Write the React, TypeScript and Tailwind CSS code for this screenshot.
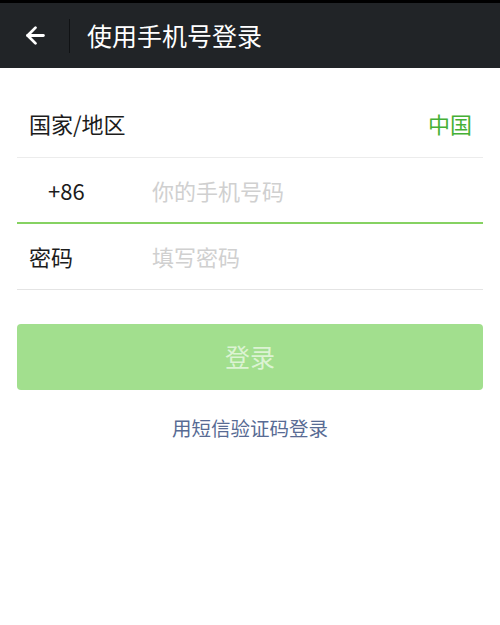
import { ArrowLeft } from 'lucide-react';

const font = {
  fontFamily: '"Noto Sans CJK SC", "Noto Sans", sans-serif',
};

const App = () => {
  return (
    <div className="bg-white w-[500px] h-[625px]" style={font}>
      <div className="bg-black h-[3px]" />
      <div className="flex items-center bg-[#212427] pl-[22px] h-[65px]">
        <ArrowLeft className="text-white" size={27} strokeWidth={2.5} />
        <div className="bg-[#101214] ml-[20px] w-[1px] h-[34px]" />
        <h1 className="ml-[17px] text-[25px] text-white leading-none">使用手机号登录</h1>
      </div>

      <div className="flex flex-col mx-[17px] mt-[22px]">
        <div className="flex justify-between items-center border-b border-b-[#ececec] pr-[11px] pl-[12px] h-[68px]">
          <span className="text-[#1c1c1c] text-[22px]">国家/地区</span>
          <span className="text-[#45b035] text-[22px]">中国</span>
        </div>
        <div className="flex flex-col h-[66px]">
          <div className="flex flex-1 items-center">
            <span className="pl-[31px] w-[135px] text-[#1c1c1c] text-[22px]">+86</span>
            <span className="text-[#d0d0d0] text-[22px]">你的手机号码</span>
          </div>
          <div className="bg-[#86d262] h-[2px]" />
        </div>
        <div className="flex items-center border-b border-b-[#e4e4e4] h-[66px]">
          <span className="pl-[12px] w-[135px] text-[#1c1c1c] text-[22px]">密码</span>
          <span className="text-[#d0d0d0] text-[22px]">填写密码</span>
        </div>

        <button
          type="button"
          className="flex justify-center items-center bg-[#a2df8e] mt-[34px] rounded-[4px] w-full h-[66px] text-[#dcf3d3] text-[25px]"
        >
          登录
        </button>

        <p className="mt-[23px] text-[#586b94] text-[19.5px] text-center">用短信验证码登录</p>
      </div>
    </div>
  );
};

export default App;
